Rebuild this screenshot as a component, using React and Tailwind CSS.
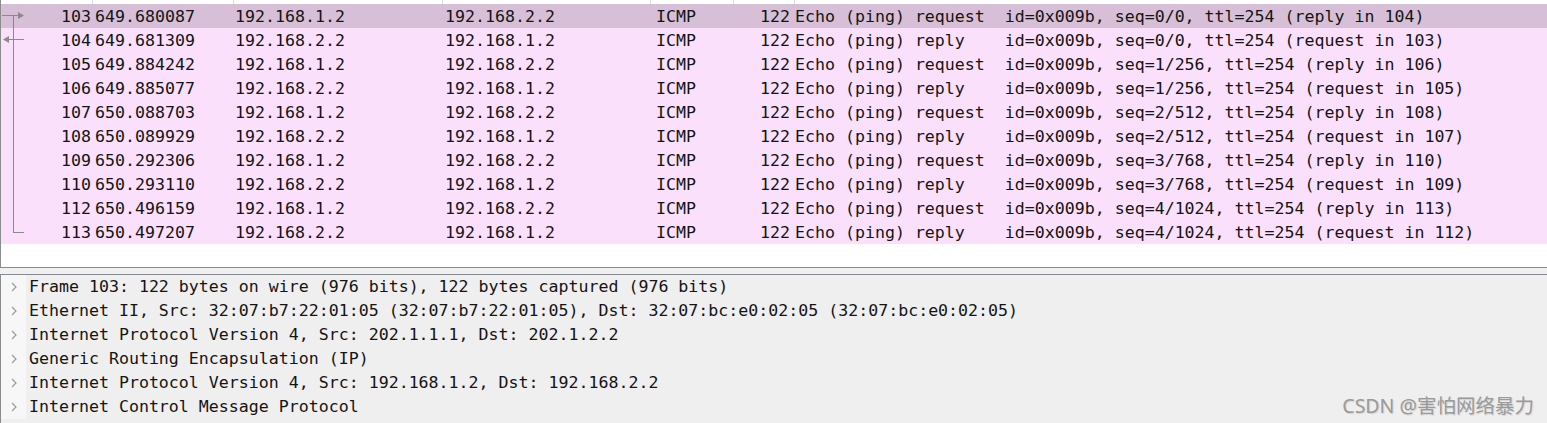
import React from "react";

const rows = [
  ["103", "649.680087", "192.168.1.2", "192.168.2.2", "request", "seq=0/0", "(reply in 104)"],
  ["104", "649.681309", "192.168.2.2", "192.168.1.2", "reply", "seq=0/0", "(request in 103)"],
  ["105", "649.884242", "192.168.1.2", "192.168.2.2", "request", "seq=1/256", "(reply in 106)"],
  ["106", "649.885077", "192.168.2.2", "192.168.1.2", "reply", "seq=1/256", "(request in 105)"],
  ["107", "650.088703", "192.168.1.2", "192.168.2.2", "request", "seq=2/512", "(reply in 108)"],
  ["108", "650.089929", "192.168.2.2", "192.168.1.2", "reply", "seq=2/512", "(request in 107)"],
  ["109", "650.292306", "192.168.1.2", "192.168.2.2", "request", "seq=3/768", "(reply in 110)"],
  ["110", "650.293110", "192.168.2.2", "192.168.1.2", "reply", "seq=3/768", "(request in 109)"],
  ["112", "650.496159", "192.168.1.2", "192.168.2.2", "request", "seq=4/1024", "(reply in 113)"],
  ["113", "650.497207", "192.168.2.2", "192.168.1.2", "reply", "seq=4/1024", "(request in 112)"],
];

const details = [
  "Frame 103: 122 bytes on wire (976 bits), 122 bytes captured (976 bits)",
  "Ethernet II, Src: 32:07:b7:22:01:05 (32:07:b7:22:01:05), Dst: 32:07:bc:e0:02:05 (32:07:bc:e0:02:05)",
  "Internet Protocol Version 4, Src: 202.1.1.1, Dst: 202.1.2.2",
  "Generic Routing Encapsulation (IP)",
  "Internet Protocol Version 4, Src: 192.168.1.2, Dst: 192.168.2.2",
  "Internet Control Message Protocol",
];

const mono = { fontFamily: '"DejaVu Sans Mono", "Liberation Mono", monospace' };

function Marker({ i }) {
  return (
    <svg width="26" height="24" className="shrink-0" viewBox="0 0 26 24">
      {i === 0 && (
        <g stroke="#8a8a8a" strokeWidth="1" fill="none">
          <line x1="1" y1="11.5" x2="19" y2="11.5" />
          <polygon points="17,8 23,11.5 17,15" fill="#8a8a8a" stroke="none" />
          <line x1="12.5" y1="12" x2="12.5" y2="24" />
        </g>
      )}
      {i === 1 && (
        <g stroke="#8a8a8a" strokeWidth="1" fill="none">
          <line x1="6" y1="11.5" x2="23" y2="11.5" />
          <polygon points="8,8 2,11.5 8,15" fill="#8a8a8a" stroke="none" />
          <line x1="12.5" y1="0" x2="12.5" y2="24" />
        </g>
      )}
      {i > 1 && i < 9 && (
        <line x1="12.5" y1="0" x2="12.5" y2="24" stroke="#8a8a8a" strokeWidth="1" />
      )}
      {i === 9 && (
        <g stroke="#8a8a8a" strokeWidth="1" fill="none">
          <line x1="12.5" y1="0" x2="12.5" y2="12.5" />
          <line x1="12" y1="12.5" x2="23" y2="12.5" />
        </g>
      )}
    </svg>
  );
}

export default function App() {
  return (
    <div className="w-[1547px] h-[423px] overflow-hidden bg-[#f0f0f0] text-[#141414] flex flex-col" style={mono}>
      {/* Packet list */}
      <div className="h-[268px] bg-white border-l border-[#8c8c8c] border-b border-b-[#868b93] flex flex-col">
        <div className="h-[4px] relative">
          <div className="absolute left-[91px] top-0 h-full w-px bg-[#dcdcdc]" />
          <div className="absolute left-[232px] top-0 h-full w-px bg-[#dcdcdc]" />
          <div className="absolute left-[441px] top-0 h-full w-px bg-[#dcdcdc]" />
          <div className="absolute left-[649px] top-0 h-full w-px bg-[#dcdcdc]" />
          <div className="absolute left-[732px] top-0 h-full w-px bg-[#dcdcdc]" />
          <div className="absolute left-[793px] top-0 h-full w-px bg-[#dcdcdc]" />
        </div>
        {rows.map((r, i) => (
          <div
            key={r[0]}
            className={`h-[24px] flex items-center whitespace-pre text-[16.6px] leading-[23px] ${i === 0 ? "bg-[#d7bfd7]" : "bg-[#fbe0fb]"}`}
          >
            <div className="w-[92px] flex items-center shrink-0">
              <Marker i={i} />
              <div className="flex-1 text-right pr-[2px]">{r[0]}</div>
            </div>
            <div className="w-[142px] pl-[2px] shrink-0">{r[1]}</div>
            <div className="w-[210px] shrink-0">{r[2]}</div>
            <div className="w-[211px] shrink-0">{r[3]}</div>
            <div className="w-[104px] shrink-0">ICMP</div>
            <div className="w-[35px] shrink-0">122</div>
            <div className="flex-1">
              {`Echo (ping) ${r[4].padEnd(7, " ")}  id=0x009b, ${r[5]}, ttl=254 ${r[6]}`}
            </div>
          </div>
        ))}
      </div>
      <div className="h-[6px] shrink-0" />
      {/* Details */}
      <div className="flex-1 border-t border-[#868b93] border-l border-l-[#8c8c8c] bg-[#efefef] relative">
        {details.map((d) => (
          <div key={d} className="h-[24px] flex items-center">
            <div className="w-[25px] h-full bg-[#f7f7f7] flex items-center justify-center shrink-0">
              <svg width="8" height="10" viewBox="0 0 8 10">
                <polyline points="2,1 6,5 2,9" fill="none" stroke="#9a9a9a" strokeWidth="1.2" />
              </svg>
            </div>
            <div className="pl-[3px] whitespace-pre text-[16.6px] leading-[24px]">{d}</div>
          </div>
        ))}
        <div
          className="absolute right-[13px] bottom-[8px] text-[19.5px] text-[#9a9a9a] leading-none"
          style={{ fontFamily: '"Noto Sans", "Noto Sans CJK SC", sans-serif', textShadow: "1px 1px 1px rgba(0,0,0,0.12)" }}
        >
          CSDN @害怕网络暴力
        </div>
      </div>
    </div>
  );
}
